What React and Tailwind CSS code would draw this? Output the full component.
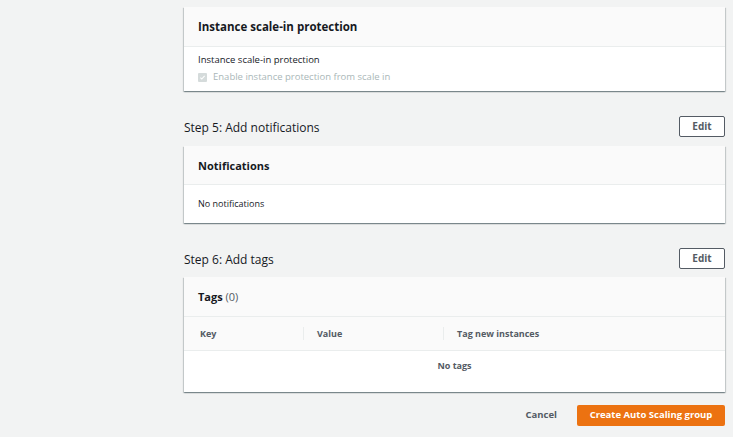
export default function App() {
  const cardShadow =
    "bg-white shadow-[0_1px_1px_0_rgba(0,28,36,0.3),1px_1px_1px_0_rgba(0,28,36,0.15),-1px_1px_1px_0_rgba(0,28,36,0.15)]";

  const EditButton = () => (
    <button className="h-[21px] w-[46px] rounded-[2px] border border-[#545b64] bg-white text-[10px] font-bold text-[#545b64]">
      Edit
    </button>
  );

  return (
    <div
      className="min-h-[437px] bg-[#f2f3f3] pt-[7px]"
      style={{ fontFamily: "'Open Sans', 'Noto Sans', sans-serif" }}
    >
      <div className="ml-[184px] w-[541px]">
        {/* Step 4 card */}
        <div className={cardShadow}>
          <div className="flex h-[40px] items-center border-b border-[#eaeded] bg-[#fafafa] px-[14px]">
            <h2 className="text-[11.5px] font-bold text-[#16191f]">Instance scale-in protection</h2>
          </div>
          <div className="px-[14px] pt-[6px] pb-[7px]">
            <div className="text-[9.5px] leading-[14px] text-[#16191f]">Instance scale-in protection</div>
            <label className="mt-[3px] flex items-center gap-[6px] text-[9.5px] leading-[14px] text-[#aab7b8]">
              <span className="flex h-[9px] w-[9px] items-center justify-center rounded-[1px] bg-[#d5dbdb]">
                <svg width="7" height="7" viewBox="0 0 10 10">
                  <path d="M2 5.2l2 2 4-4.4" fill="none" stroke="#fff" strokeWidth="1.6" />
                </svg>
              </span>
              Enable instance protection from scale in
            </label>
          </div>
        </div>

        {/* Step 5 */}
        <div className="mt-[25px] flex items-center justify-between">
          <h3 className="pt-[2px] text-[12px] text-[#16191f]">Step 5: Add notifications</h3>
          <EditButton />
        </div>
        <div className={`mt-[9px] ${cardShadow}`}>
          <div className="flex h-[39px] items-center border-b border-[#eaeded] bg-[#fafafa] px-[14px]">
            <h2 className="pt-[2px] text-[11px] font-bold text-[#16191f]">Notifications</h2>
          </div>
          <div className="flex h-[38px] items-center px-[14px] text-[9px] text-[#16191f]">No notifications</div>
        </div>

        {/* Step 6 */}
        <div className="mt-[25px] flex items-center justify-between">
          <h3 className="pt-[2px] text-[12px] text-[#16191f]">Step 6: Add tags</h3>
          <EditButton />
        </div>
        <div className={`mt-[8px] ${cardShadow}`}>
          <div className="flex h-[40px] items-center border-b border-[#eaeded] bg-[#fafafa] px-[14px]">
            <h2 className="pt-[1px] text-[11px] font-bold text-[#16191f]">
              Tags <span className="font-normal text-[#545b64]">(0)</span>
            </h2>
          </div>
          <div className="grid h-[34px] grid-cols-[119px_140px_1fr] items-center border-b border-[#eaeded] bg-[#fafafa] text-[9px] font-bold text-[#545b64]">
            <div className="pl-[16px]">Key</div>
            <div className="border-l border-[#eaeded] pl-[13px]">Value</div>
            <div className="border-l border-[#eaeded] pl-[13px]">Tag new instances</div>
          </div>
          <div className="h-[41px] pt-[8px] text-center text-[9px] font-bold text-[#545b64]">No tags</div>
        </div>

        {/* Footer */}
        <div className="mt-[13px] flex items-center justify-end gap-[20px]">
          <button className="text-[9.5px] font-bold text-[#545b64]">Cancel</button>
          <button className="h-[21px] w-[148px] rounded-[2px] bg-[#ec7211] text-[9.5px] font-bold text-white">
            Create Auto Scaling group
          </button>
        </div>
      </div>
    </div>
  );
}
